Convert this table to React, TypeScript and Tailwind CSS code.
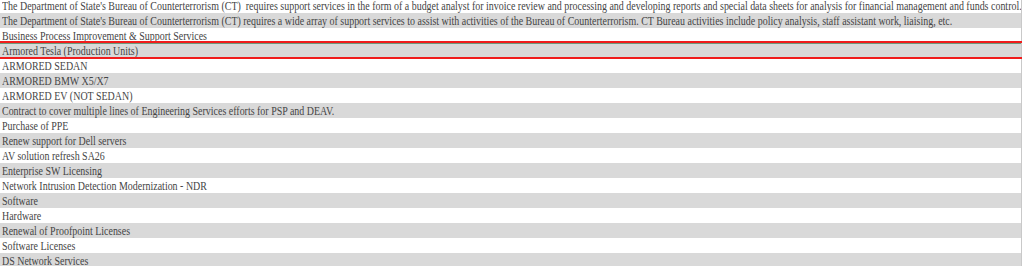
const rows: string[] = [
  "The Department of State's Bureau of Counterterrorism (CT)  requires support services in the form of a budget analyst for invoice review and processing and developing reports and special data sheets for analysis for financial management and funds control.",
  "The Department of State's Bureau of Counterterrorism (CT) requires a wide array of support services to assist with activities of the Bureau of Counterterrorism. CT Bureau activities include policy analysis, staff assistant work, liaising, etc.",
  'Business Process Improvement & Support Services',
  'Armored Tesla (Production Units)',
  'ARMORED SEDAN',
  'ARMORED BMW X5/X7',
  'ARMORED EV (NOT SEDAN)',
  'Contract to cover multiple lines of Engineering Services efforts for PSP and DEAV.',
  'Purchase of PPE',
  'Renew support for Dell servers',
  'AV solution refresh SA26',
  'Enterprise SW Licensing',
  'Network Intrusion Detection Modernization - NDR',
  'Software',
  'Hardware',
  'Renewal of Proofpoint Licenses',
  'Software Licenses',
  'DS Network Services',
];

const SELECTED = 3;

export default function App() {
  return (
    <div className="relative h-[266px] w-[1024px] overflow-hidden bg-white font-['Liberation_Serif',serif]">
      <div className="-mt-[2px] w-[1022px] border-r border-[#c9c9c9]">
        {rows.map((text, i) => (
          <div
            key={i}
            className={`relative h-[15px] overflow-hidden whitespace-pre pl-[2px] text-[13px] leading-[15px] text-[#454545] ${
              i % 2 === 1 ? 'bg-[#d9d9d9]' : 'bg-white'
            }`}
          >
            <span className="inline-block origin-left scale-x-[0.766]">{text}</span>
            {i === SELECTED && <div className="absolute inset-x-0 top-0 h-px bg-[#6d9a7c]" />}
          </div>
        ))}
      </div>
      {/* selection outline around the Tesla row */}
      <div className="pointer-events-none absolute left-0 top-[41px] h-[18px] w-[1022px] border-y-2 border-[#f01c1c]" />
    </div>
  );
}
